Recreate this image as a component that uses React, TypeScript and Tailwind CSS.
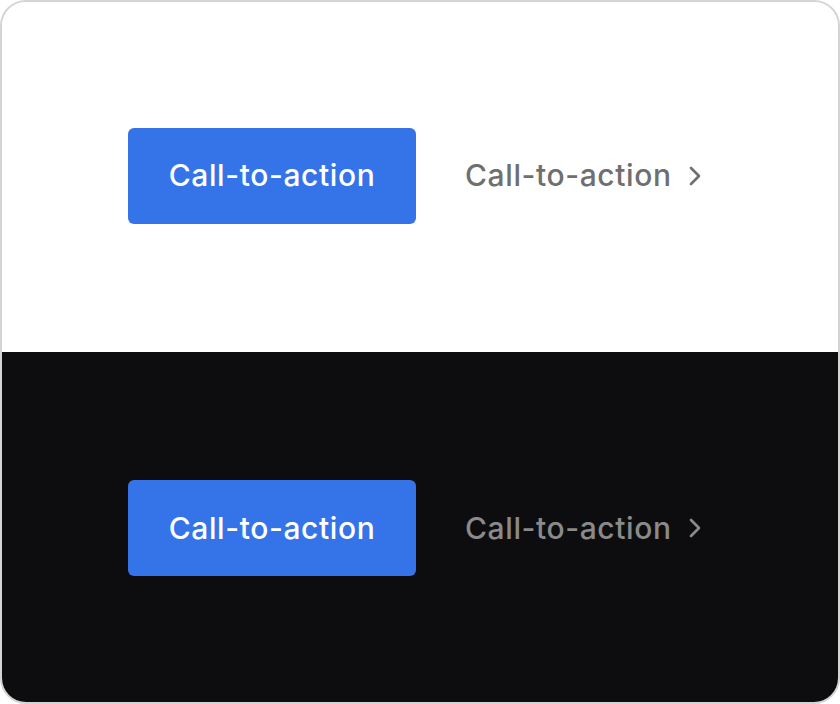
function Chevron() {
  return (
    <svg width="14" height="22" viewBox="0 0 14 22" fill="none">
      <polyline
        points="3,3 11,11 3,19"
        stroke="currentColor"
        strokeWidth="2.6"
        strokeLinecap="round"
        strokeLinejoin="round"
      />
    </svg>
  );
}

function Row({ dark }: { dark?: boolean }) {
  return (
    <div
      className={
        "flex h-[350px] items-center gap-[50px] pl-[126px] " +
        (dark ? "bg-[#0d0d0f] pt-[2px]" : "bg-white pb-[3px]")
      }
    >
      <button className="flex h-[96px] w-[288px] items-center justify-center rounded-[6px] bg-[#3573e8] text-[30px] font-medium tracking-[0.02em] text-white">
        Call-to-action
      </button>
      <a
        className={
          "-ml-[1px] flex items-center gap-[16px] text-[30px] font-medium tracking-[0.02em] " +
          (dark ? "text-[#8a8a8b]" : "text-[#6f6f70]")
        }
      >
        Call-to-action
        <Chevron />
      </a>
    </div>
  );
}

export default function App() {
  return (
    <div
      className="h-[704px] w-[840px] overflow-hidden rounded-[26px] border-2 border-[#d4d4d4]"
      style={{ fontFamily: "Inter, 'Noto Sans', sans-serif" }}
    >
      <Row />
      <Row dark />
    </div>
  );
}
